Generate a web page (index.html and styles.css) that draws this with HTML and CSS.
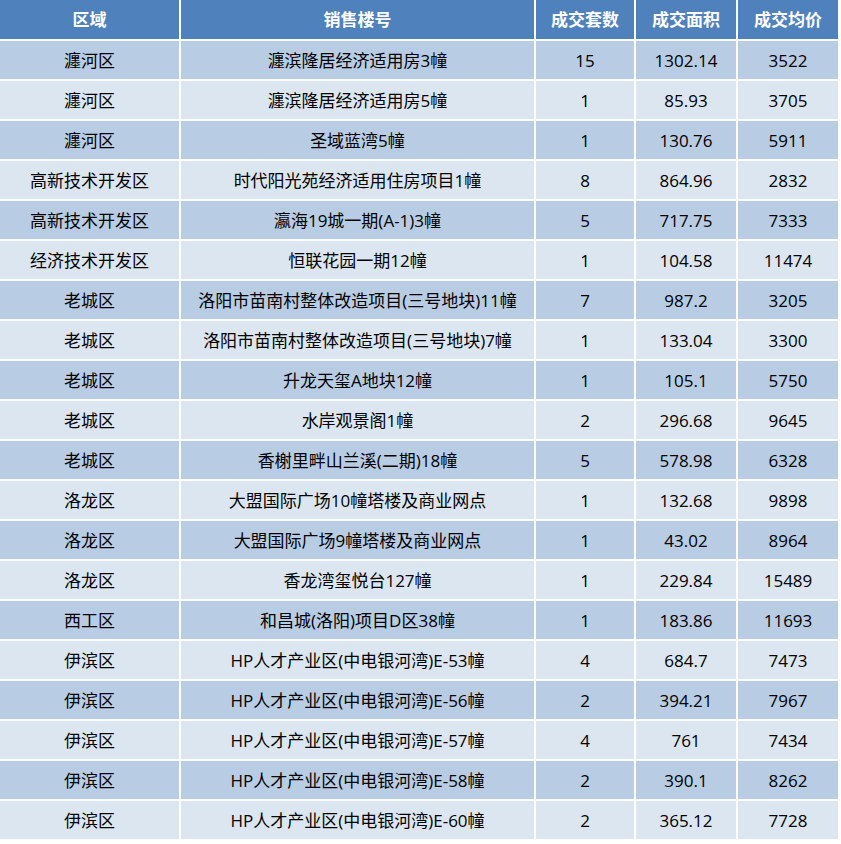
FILE: index.html
```html
<!DOCTYPE html>
<html lang="zh-CN">
<head>
<meta charset="utf-8">
<title>成交表</title>
<link rel="stylesheet" href="styles.css">
</head>
<body>
<div class="table">
  <div class="cell head">区域</div><div class="cell head">销售楼号</div><div class="cell head">成交套数</div><div class="cell head">成交面积</div><div class="cell head">成交均价</div>
  <div class="cell odd">瀍河区</div><div class="cell odd">瀍滨隆居经济适用房3幢</div><div class="cell odd">15</div><div class="cell odd">1302.14</div><div class="cell odd">3522</div>
  <div class="cell even">瀍河区</div><div class="cell even">瀍滨隆居经济适用房5幢</div><div class="cell even">1</div><div class="cell even">85.93</div><div class="cell even">3705</div>
  <div class="cell odd">瀍河区</div><div class="cell odd">圣域蓝湾5幢</div><div class="cell odd">1</div><div class="cell odd">130.76</div><div class="cell odd">5911</div>
  <div class="cell even">高新技术开发区</div><div class="cell even">时代阳光苑经济适用住房项目1幢</div><div class="cell even">8</div><div class="cell even">864.96</div><div class="cell even">2832</div>
  <div class="cell odd">高新技术开发区</div><div class="cell odd">瀛海19城一期(A-1)3幢</div><div class="cell odd">5</div><div class="cell odd">717.75</div><div class="cell odd">7333</div>
  <div class="cell even">经济技术开发区</div><div class="cell even">恒联花园一期12幢</div><div class="cell even">1</div><div class="cell even">104.58</div><div class="cell even">11474</div>
  <div class="cell odd">老城区</div><div class="cell odd">洛阳市苗南村整体改造项目(三号地块)11幢</div><div class="cell odd">7</div><div class="cell odd">987.2</div><div class="cell odd">3205</div>
  <div class="cell even">老城区</div><div class="cell even">洛阳市苗南村整体改造项目(三号地块)7幢</div><div class="cell even">1</div><div class="cell even">133.04</div><div class="cell even">3300</div>
  <div class="cell odd">老城区</div><div class="cell odd">升龙天玺A地块12幢</div><div class="cell odd">1</div><div class="cell odd">105.1</div><div class="cell odd">5750</div>
  <div class="cell even">老城区</div><div class="cell even">水岸观景阁1幢</div><div class="cell even">2</div><div class="cell even">296.68</div><div class="cell even">9645</div>
  <div class="cell odd">老城区</div><div class="cell odd">香榭里畔山兰溪(二期)18幢</div><div class="cell odd">5</div><div class="cell odd">578.98</div><div class="cell odd">6328</div>
  <div class="cell even">洛龙区</div><div class="cell even">大盟国际广场10幢塔楼及商业网点</div><div class="cell even">1</div><div class="cell even">132.68</div><div class="cell even">9898</div>
  <div class="cell odd">洛龙区</div><div class="cell odd">大盟国际广场9幢塔楼及商业网点</div><div class="cell odd">1</div><div class="cell odd">43.02</div><div class="cell odd">8964</div>
  <div class="cell even">洛龙区</div><div class="cell even">香龙湾玺悦台127幢</div><div class="cell even">1</div><div class="cell even">229.84</div><div class="cell even">15489</div>
  <div class="cell odd">西工区</div><div class="cell odd">和昌城(洛阳)项目D区38幢</div><div class="cell odd">1</div><div class="cell odd">183.86</div><div class="cell odd">11693</div>
  <div class="cell even">伊滨区</div><div class="cell even">HP人才产业区(中电银河湾)E-53幢</div><div class="cell even">4</div><div class="cell even">684.7</div><div class="cell even">7473</div>
  <div class="cell odd">伊滨区</div><div class="cell odd">HP人才产业区(中电银河湾)E-56幢</div><div class="cell odd">2</div><div class="cell odd">394.21</div><div class="cell odd">7967</div>
  <div class="cell even">伊滨区</div><div class="cell even">HP人才产业区(中电银河湾)E-57幢</div><div class="cell even">4</div><div class="cell even">761</div><div class="cell even">7434</div>
  <div class="cell odd">伊滨区</div><div class="cell odd">HP人才产业区(中电银河湾)E-58幢</div><div class="cell odd">2</div><div class="cell odd">390.1</div><div class="cell odd">8262</div>
  <div class="cell even">伊滨区</div><div class="cell even">HP人才产业区(中电银河湾)E-60幢</div><div class="cell even">2</div><div class="cell even">365.12</div><div class="cell even">7728</div>
</div>
</body>
</html>
```
FILE: styles.css
```css
html, body {
  margin: 0;
  padding: 0;
  background: #ffffff;
}
.table {
  display: grid;
  grid-template-columns: 179px 353px 98px 100px 100px;
  grid-template-rows: 39px repeat(20, 38px);
  gap: 2px;
  width: 838px;
  font-family: "Open Sans", "Noto Sans CJK SC", sans-serif;
  font-size: 17px;
  color: #000000;
}
.cell {
  display: flex;
  align-items: center;
  justify-content: center;
  white-space: nowrap;
  line-height: 1;
}
.head {
  background: #4f81bd;
  color: #ffffff;
  font-weight: bold;
  font-size: 17px;
}
.odd {
  background: #b8cce4;
}
.even {
  background: #dce6f1;
}
```
